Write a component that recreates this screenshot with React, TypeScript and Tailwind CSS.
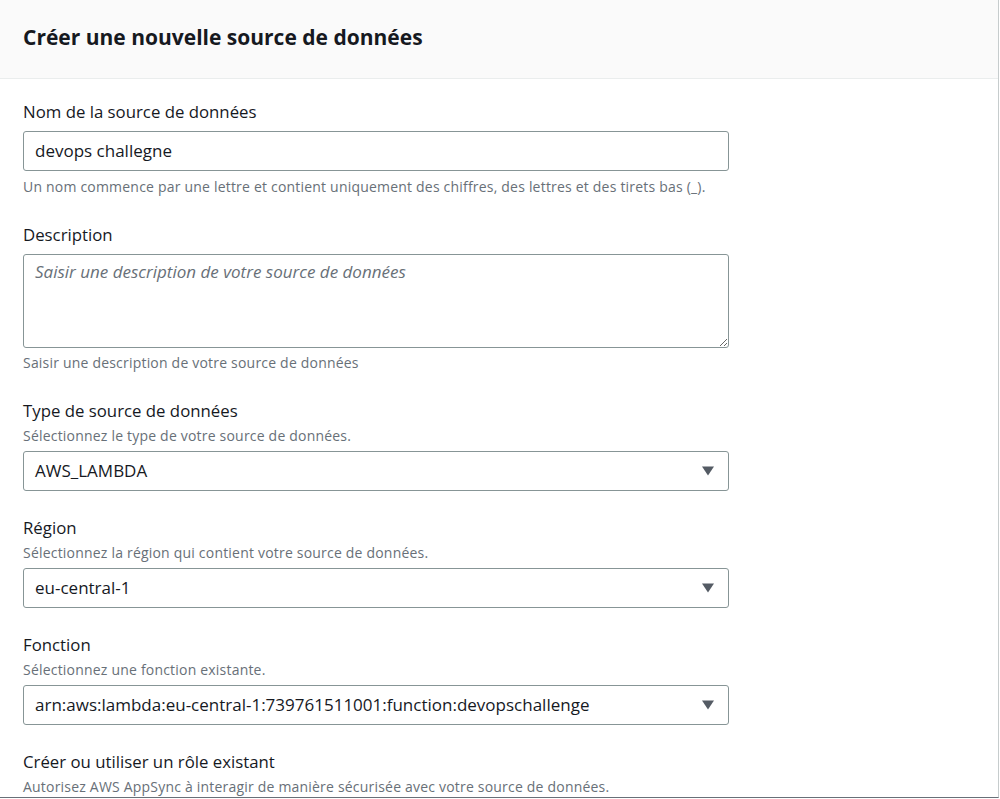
import { ReactNode } from "react";

const font = { fontFamily: '"Open Sans", "Noto Sans", sans-serif' };

function Caret() {
  return (
    <svg width="12" height="10" viewBox="0 0 12 10" className="shrink-0">
      <path d="M0 0.5h12L6 9.5z" fill="#545b64" />
    </svg>
  );
}

function Field({
  label,
  sub,
  hint,
  hintGap = "mt-[6px]",
  children,
}: {
  label: string;
  sub?: string;
  hint?: string;
  hintGap?: string;
  children?: ReactNode;
}) {
  return (
    <div className="flex flex-col">
      <label className="text-[16.8px] leading-[24px] text-[#16191f]">{label}</label>
      {sub && (
        <p className="text-[14px] tracking-[0.2px] leading-[20px] text-[#687078] mt-[3px] mb-[5px]">{sub}</p>
      )}
      {!sub && <div className="h-[7px]" />}
      {children}
      {hint && (
        <p className={`text-[14px] tracking-[0.2px] leading-[20px] text-[#687078] mb-[1px] ${hintGap}`}>{hint}</p>
      )}
    </div>
  );
}

function Select({ value }: { value: string }) {
  return (
    <div className="w-[706px] h-[40px] border border-[#879596] rounded-[3px] flex items-center justify-between pl-[11px] pr-[14px]">
      <span className="text-[17px] text-[#16191f]">{value}</span>
      <Caret />
    </div>
  );
}

export default function App() {
  return (
    <div style={font} className="w-[1000px] h-[799px] overflow-hidden bg-white">
      <div className="w-[999px] h-[798px] border-r border-b border-r-[#c6cccd] border-b-[#687078] overflow-hidden">
        {/* Header */}
        <div className="h-[79px] bg-[#fafafa] border-b border-[#eaeded] flex items-center px-[23px]">
          <h2 className="text-[21px] font-bold text-[#16191f] -mt-[3px]">
            Créer une nouvelle source de données
          </h2>
        </div>

        {/* Body */}
        <div className="px-[23px] pt-[21px] flex flex-col gap-[25px]">
          <Field
            label="Nom de la source de données"
            hint="Un nom commence par une lettre et contient uniquement des chiffres, des lettres et des tirets bas (_)."
          >
            <div className="w-[706px] h-[40px] border border-[#879596] rounded-[3px] flex items-center px-[11px]">
              <span className="text-[17px] text-[#16191f]">devops challegne</span>
            </div>
          </Field>

          <Field
            label="Description"
            hint="Saisir une description de votre source de données"
            hintGap="mt-[5px]"
          >
            <textarea
              readOnly
              placeholder="Saisir une description de votre source de données"
              className="block w-[706px] h-[94px] border border-[#879596] rounded-[3px] px-[11px] pt-[6px] leading-[22px] text-[17px] italic placeholder:text-[#687078] outline-none resize-y"
            />
          </Field>

          <Field label="Type de source de données" sub="Sélectionnez le type de votre source de données.">
            <Select value="AWS_LAMBDA" />
          </Field>

          <Field label="Région" sub="Sélectionnez la région qui contient votre source de données.">
            <Select value="eu-central-1" />
          </Field>

          <Field label="Fonction" sub="Sélectionnez une fonction existante.">
            <Select value="arn:aws:lambda:eu-central-1:739761511001:function:devopschallenge" />
          </Field>

          <Field
            label="Créer ou utiliser un rôle existant"
            sub="Autorisez AWS AppSync à interagir de manière sécurisée avec votre source de données."
          />
        </div>
      </div>
    </div>
  );
}
